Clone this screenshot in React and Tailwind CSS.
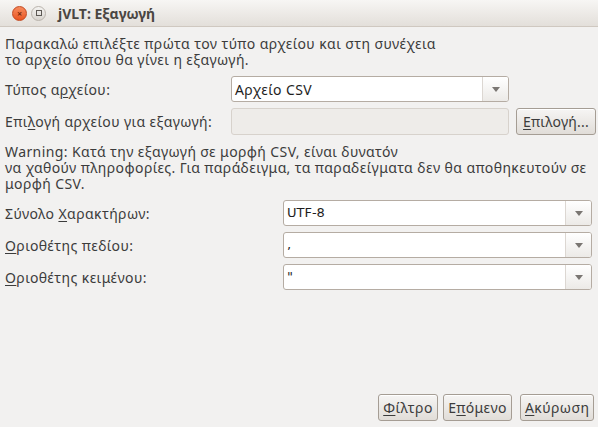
import React from "react";

// mnemonic underline helper
function Mn({ children }) {
    return <span className="underline underline-offset-[2px] decoration-1">{children}</span>;
}

function Combo({ value, className = "", textClass = "font-['DejaVu_Sans',sans-serif] text-[13px] tracking-normal" }) {
    return (
        <div className={`flex h-[26px] rounded-[3px] border border-[#b5aca3] bg-white overflow-hidden ${className}`}>
            <div className={`flex-1 flex items-center pl-[3px] text-[#1e1e1e] ${textClass}`}>
                {value}
            </div>
            <div className="w-[26px] flex items-center justify-center border-l border-[#dcd7d2] bg-gradient-to-b from-[#ffffff] to-[#eceae7]">
                <svg width="8" height="5" viewBox="0 0 8 5">
                    <path d="M0 0 L8 0 L4 5 Z" fill="#7a7672" />
                </svg>
            </div>
        </div>
    );
}

function Button({ children, className = "" }) {
    return (
        <button
            className={`h-[27px] px-[4px] rounded-[3px] border border-[#a59d94] bg-gradient-to-b from-[#f6f5f4] to-[#e1ddd8] text-[#3c3c3c] text-[14px] leading-none whitespace-nowrap shadow-[inset_0_1px_0_#fff] ${className}`}
        >
            {children}
        </button>
    );
}

export default function App() {
    return (
        <div className="w-[598px] h-[427px] flex flex-col bg-[#f2f1f0] text-[#3c3c3c] font-['Noto_Sans',sans-serif] text-[14px] tracking-[0.4px] overflow-hidden">
            {/* Title bar */}
            <div className="h-[27px] flex items-center bg-gradient-to-b from-[#f7f6f4] to-[#e3dfda] border-b border-[#cfc8c0] pl-[12px] tracking-normal">
                <div className="w-[15px] h-[15px] rounded-full bg-gradient-to-b from-[#f68a5c] to-[#e9541f] border border-[#c4481f] flex items-center justify-center">
                    <span className="text-[9px] leading-none text-[#7a2a0a] font-bold">×</span>
                </div>
                <div className="ml-[4px] w-[15px] h-[15px] rounded-full bg-gradient-to-b from-[#f4f3f1] to-[#d8d4cf] border border-[#b9b3ac] flex items-center justify-center">
                    <div className="w-[6px] h-[6px] border border-[#5d5955]" />
                </div>
                <span className="ml-[12px] font-bold text-[14px] text-[#4a4642]">jVLT: Εξαγωγή</span>
            </div>

            {/* Body */}
            <div className="flex-1 flex flex-col pl-[5px] pr-[3px]">
                <p className="mt-[9px] leading-[16px]">
                    Παρακαλώ επιλέξτε πρώτα τον τύπο αρχείου και στη συνέχεια
                    <br />
                    το αρχείο όπου θα γίνει η εξαγωγή.
                </p>

                <div className="mt-[8px] grid grid-cols-[226px_278px_80px] gap-y-[6px] items-center">
                    <span>Τύπος α<Mn>ρ</Mn>χείου:</span>
                    <Combo value="Αρχείο CSV" className="h-[25px]" textClass="text-[14px]" />
                    <span />
                    <span>Επι<Mn>λ</Mn>ογή αρχείου για εξαγωγή:</span>
                    <div className="h-[27px] rounded-[3px] border border-[#d7d2cc] bg-[#eeece9]" />
                    <Button className="ml-[7px] w-[80px] tracking-[0.2px]">
                        <Mn>Ε</Mn>πιλογή...
                    </Button>
                </div>

                <p className="mt-[9px] leading-[16px]">
                    Warning: Κατά την εξαγωγή σε μορφή CSV, είναι δυνατόν
                    <br />
                    να χαθούν πληροφορίες. Για παράδειγμα, τα παραδείγματα δεν θα αποθηκευτούν σε
                    <br />
                    μορφή CSV.
                </p>

                <div className="mt-[8px] grid grid-cols-[278px_309px] gap-y-[6px] items-center">
                    <span>Σύνολο <Mn>Χ</Mn>αρακτήρων:</span>
                    <Combo value="UTF-8" />
                    <span><Mn>Ο</Mn>ριοθέτης πεδίου:</span>
                    <Combo value="," />
                    <span><Mn>Ο</Mn>ριοθέτης κειμένου:</span>
                    <Combo value='"' />
                </div>

                <div className="mt-auto mb-[6px] flex justify-end gap-[5px] pr-[1px]">
                    <Button className="w-[60px]">
                        <Mn>Φ</Mn>ίλτρο
                    </Button>
                    <Button className="w-[69px]">
                        Ε<Mn>π</Mn>όμενο
                    </Button>
                    <Button className="ml-[3px] w-[74px]">
                        <Mn>Α</Mn>κύρωση
                    </Button>
                </div>
            </div>
        </div>
    );
}
